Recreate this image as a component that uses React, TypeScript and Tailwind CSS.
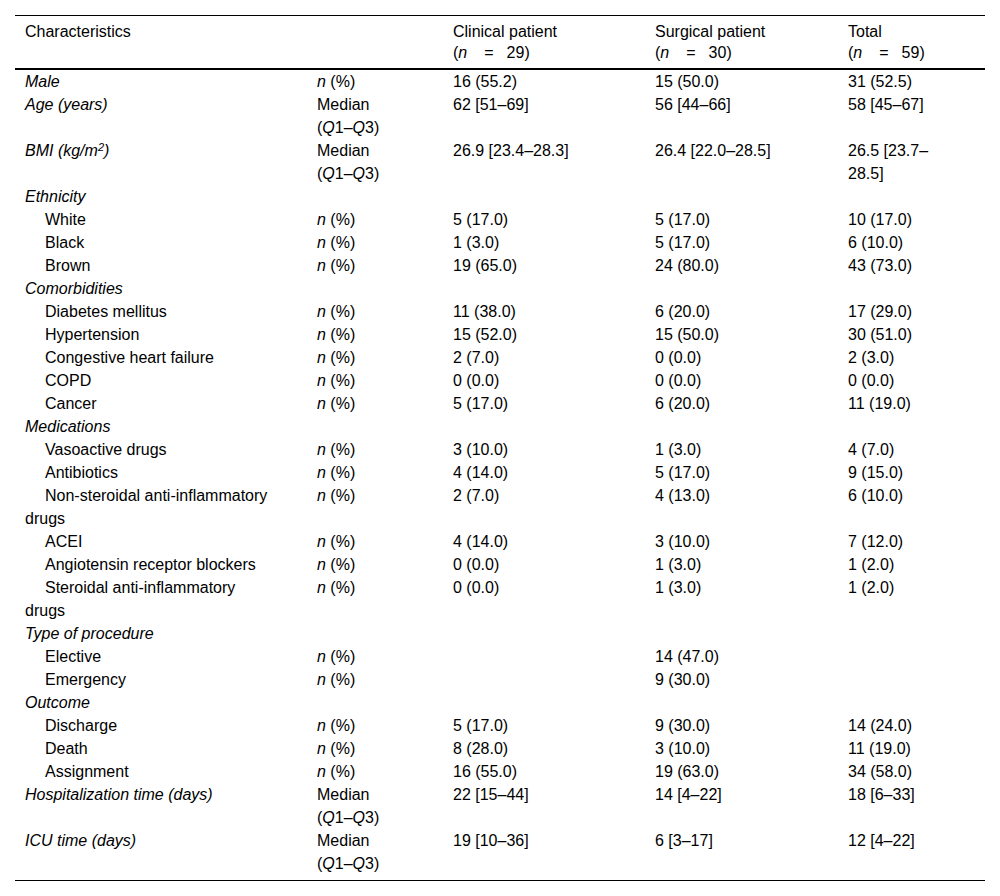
import type { ReactNode } from 'react'

type Row = {
  label: ReactNode
  kind: 'main' | 'section' | 'sub'
  stat?: 'n' | 'median'
  values?: [string, string, string]
}

const Npct = () => (
  <>
    <i>n</i> (%)
  </>
)

const Median = () => (
  <>
    Median <span className="whitespace-nowrap">(<i>Q</i>1–<i>Q</i>3)</span>
  </>
)

const rows: Row[] = [
  { label: 'Male', kind: 'main', stat: 'n', values: ['16 (55.2)', '15 (50.0)', '31 (52.5)'] },
  { label: 'Age (years)', kind: 'main', stat: 'median', values: ['62 [51–69]', '56 [44–66]', '58 [45–67]'] },
  {
    label: (
      <>
        BMI (kg/m<sup className="text-[11px]">2</sup>)
      </>
    ),
    kind: 'main',
    stat: 'median',
    values: ['26.9 [23.4–28.3]', '26.4 [22.0–28.5]', '26.5 [23.7–28.5]'],
  },
  { label: 'Ethnicity', kind: 'section' },
  { label: 'White', kind: 'sub', stat: 'n', values: ['5 (17.0)', '5 (17.0)', '10 (17.0)'] },
  { label: 'Black', kind: 'sub', stat: 'n', values: ['1 (3.0)', '5 (17.0)', '6 (10.0)'] },
  { label: 'Brown', kind: 'sub', stat: 'n', values: ['19 (65.0)', '24 (80.0)', '43 (73.0)'] },
  { label: 'Comorbidities', kind: 'section' },
  { label: 'Diabetes mellitus', kind: 'sub', stat: 'n', values: ['11 (38.0)', '6 (20.0)', '17 (29.0)'] },
  { label: 'Hypertension', kind: 'sub', stat: 'n', values: ['15 (52.0)', '15 (50.0)', '30 (51.0)'] },
  { label: 'Congestive heart failure', kind: 'sub', stat: 'n', values: ['2 (7.0)', '0 (0.0)', '2 (3.0)'] },
  { label: 'COPD', kind: 'sub', stat: 'n', values: ['0 (0.0)', '0 (0.0)', '0 (0.0)'] },
  { label: 'Cancer', kind: 'sub', stat: 'n', values: ['5 (17.0)', '6 (20.0)', '11 (19.0)'] },
  { label: 'Medications', kind: 'section' },
  { label: 'Vasoactive drugs', kind: 'sub', stat: 'n', values: ['3 (10.0)', '1 (3.0)', '4 (7.0)'] },
  { label: 'Antibiotics', kind: 'sub', stat: 'n', values: ['4 (14.0)', '5 (17.0)', '9 (15.0)'] },
  { label: 'Non-steroidal anti-inflammatory drugs', kind: 'sub', stat: 'n', values: ['2 (7.0)', '4 (13.0)', '6 (10.0)'] },
  { label: 'ACEI', kind: 'sub', stat: 'n', values: ['4 (14.0)', '3 (10.0)', '7 (12.0)'] },
  { label: 'Angiotensin receptor blockers', kind: 'sub', stat: 'n', values: ['0 (0.0)', '1 (3.0)', '1 (2.0)'] },
  { label: 'Steroidal anti-inflammatory drugs', kind: 'sub', stat: 'n', values: ['0 (0.0)', '1 (3.0)', '1 (2.0)'] },
  { label: 'Type of procedure', kind: 'section' },
  { label: 'Elective', kind: 'sub', stat: 'n', values: ['', '14 (47.0)', ''] },
  { label: 'Emergency', kind: 'sub', stat: 'n', values: ['', '9 (30.0)', ''] },
  { label: 'Outcome', kind: 'section' },
  { label: 'Discharge', kind: 'sub', stat: 'n', values: ['5 (17.0)', '9 (30.0)', '14 (24.0)'] },
  { label: 'Death', kind: 'sub', stat: 'n', values: ['8 (28.0)', '3 (10.0)', '11 (19.0)'] },
  { label: 'Assignment', kind: 'sub', stat: 'n', values: ['16 (55.0)', '19 (63.0)', '34 (58.0)'] },
  { label: 'Hospitalization time (days)', kind: 'main', stat: 'median', values: ['22 [15–44]', '14 [4–22]', '18 [6–33]'] },
  { label: 'ICU time (days)', kind: 'main', stat: 'median', values: ['19 [10–36]', '6 [3–17]', '12 [4–22]'] },
]

// padding per column, the last one is narrower so long ranges wrap like the source
const cellPad = ['pl-[10px] pr-[32px]', 'pl-[10px] pr-[20px]', 'pl-[10px] pr-[20px]', 'pl-[10px] pr-[20px]', 'pl-[10px] pr-[32px]']

function GroupHead({ title, n }: { title: string; n: number }) {
  return (
    <>
      {title}
      <br />
      (<i>n</i>
      <span className="inline-block w-[17px]" />=<span className="inline-block w-[13px]" />
      {n})
    </>
  )
}

export default function App() {
  return (
    <div className="min-h-screen bg-white pt-[15px] px-[15px] text-[16px] leading-[23px] text-black" style={{ fontFamily: '"Liberation Sans", Arial, sans-serif' }}>
      <table className="w-[970px] table-fixed border-collapse border-t border-b border-black">
        <colgroup>
          <col className="w-[292px]" />
          <col className="w-[136px]" />
          <col className="w-[202px]" />
          <col className="w-[193px]" />
          <col className="w-[147px]" />
        </colgroup>
        <thead>
          <tr className="border-b-2 border-black align-top leading-[21px]">
            <th className={`${cellPad[0]} pt-[5px] pb-[5px] text-left font-normal`}>Characteristics</th>
            <th className={`${cellPad[1]} pt-[5px] pb-[5px] text-left font-normal`} />
            <th className={`${cellPad[2]} pt-[5px] pb-[5px] text-left font-normal`}>
              <GroupHead title="Clinical patient" n={29} />
            </th>
            <th className={`${cellPad[3]} pt-[5px] pb-[5px] text-left font-normal`}>
              <GroupHead title="Surgical patient" n={30} />
            </th>
            <th className={`${cellPad[4]} pt-[5px] pb-[5px] text-left font-normal`}>
              <GroupHead title="Total" n={59} />
            </th>
          </tr>
        </thead>
        <tbody>
          {rows.map((r, idx) => {
            const last = idx === rows.length - 1 ? 'pb-[5px]' : ''
            return (
              <tr key={idx} className="align-top">
                <td className={`${cellPad[0]} ${last} ${r.kind === 'sub' ? 'indent-[20px]' : 'italic'}`}>{r.label}</td>
                <td className={`${cellPad[1]} ${last}`}>{r.stat === 'n' ? <Npct /> : r.stat === 'median' ? <Median /> : null}</td>
                {(r.values ?? ['', '', '']).map((v, i) => (
                  <td key={i} className={`${cellPad[i + 2]} ${last}`}>
                    {v}
                  </td>
                ))}
              </tr>
            )
          })}
        </tbody>
      </table>
    </div>
  )
}
